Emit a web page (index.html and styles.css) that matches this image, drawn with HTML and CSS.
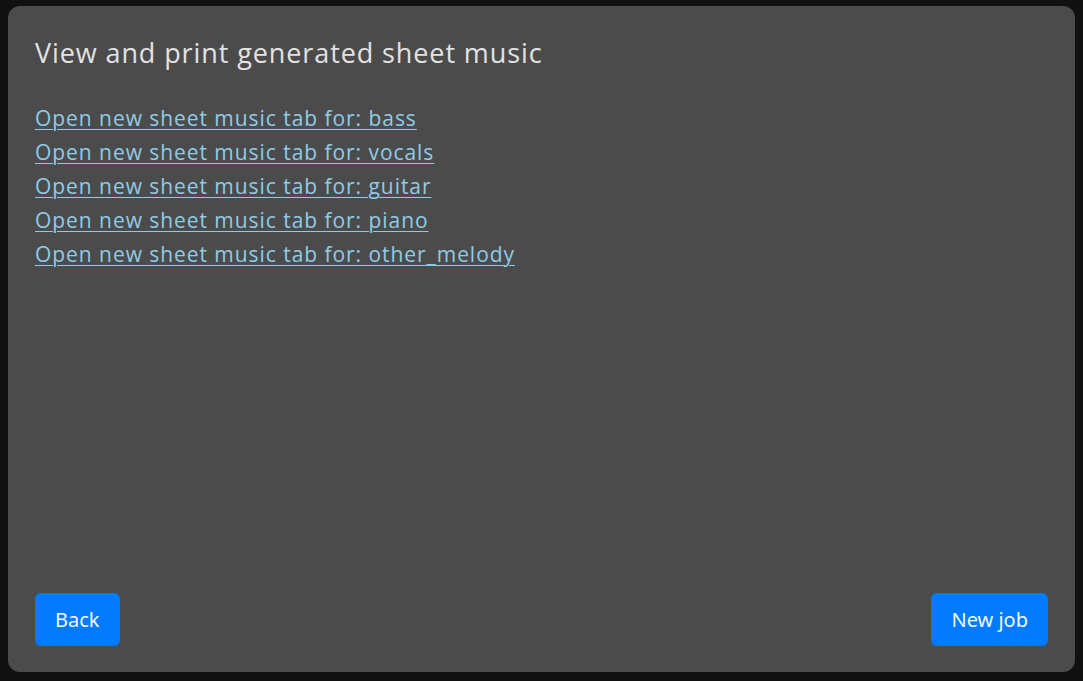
FILE: index.html
```html
<!DOCTYPE html>
<html lang="en">
<head>
<meta charset="utf-8">
<title>Sheet music</title>
<link rel="stylesheet" href="styles.css">
</head>
<body>
<main class="card">
  <h1 class="title">View and print generated sheet music</h1>
  <ul class="links">
    <li><a href="#">Open new sheet music tab for: bass</a></li>
    <li><a href="#">Open new sheet music tab for: vocals</a></li>
    <li><a href="#">Open new sheet music tab for: guitar</a></li>
    <li><a href="#">Open new sheet music tab for: piano</a></li>
    <li><a href="#">Open new sheet music tab for: other_melody</a></li>
  </ul>
  <div class="actions">
    <button class="btn">Back</button>
    <button class="btn">New job</button>
  </div>
</main>
</body>
</html>
```

FILE: styles.css
```css
html, body {
  margin: 0;
  height: 100%;
  background: #111111;
}
body {
  box-sizing: border-box;
  padding: 6px 8px 9px 8px;
  font-family: "Open Sans", "Noto Sans", sans-serif;
}
.card {
  box-sizing: border-box;
  height: 100%;
  background: #4b4b4b;
  border-radius: 12px;
  padding: 27px 27px 26px 27px;
  display: flex;
  flex-direction: column;
}
.title {
  margin: 0;
  font-weight: 400;
  font-size: 27px;
  line-height: 40px;
  color: #e2e2e2;
  letter-spacing: 0.9px;
}
.links {
  list-style: none;
  margin: 28px 0 0 0;
  padding: 0;
  display: flex;
  flex-direction: column;
}
.links li {
  line-height: 34px;
  font-size: 21px;
}
.links a {
  color: #8ecbe8;
  text-decoration: underline;
  text-decoration-thickness: 1px;
  text-underline-offset: 3px;
  letter-spacing: 0.95px;
}
.actions {
  margin-top: auto;
  display: flex;
  justify-content: space-between;
}
.btn {
  height: 53px;
  padding: 0 20px;
  border: none;
  border-radius: 6px;
  background: #007bff;
  color: #f4f8ff;
  font-family: "Noto Sans", "Open Sans", sans-serif;
  font-size: 20px;
}
```
